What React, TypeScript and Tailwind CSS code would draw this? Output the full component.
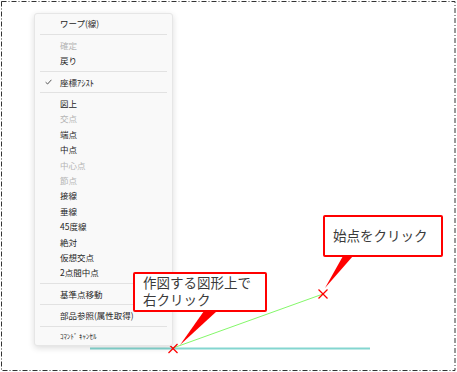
import React from "react"

type Row = { kind: "item"; label: string; disabled?: boolean; checked?: boolean; small?: boolean } | { kind: "sep" }

const rows: Row[] = [
  { kind: "item", label: "ワープ(線)" },
  { kind: "sep" },
  { kind: "item", label: "確定", disabled: true },
  { kind: "item", label: "戻り" },
  { kind: "sep" },
  { kind: "item", label: "座標ｱｼｽﾄ", checked: true },
  { kind: "sep" },
  { kind: "item", label: "図上" },
  { kind: "item", label: "交点", disabled: true },
  { kind: "item", label: "端点" },
  { kind: "item", label: "中点" },
  { kind: "item", label: "中心点", disabled: true },
  { kind: "item", label: "節点", disabled: true },
  { kind: "item", label: "接線" },
  { kind: "item", label: "垂線" },
  { kind: "item", label: "45度線" },
  { kind: "item", label: "絶対" },
  { kind: "item", label: "仮想交点" },
  { kind: "item", label: "2点間中点" },
  { kind: "sep" },
  { kind: "item", label: "基準点移動" },
  { kind: "sep" },
  { kind: "item", label: "部品参照(属性取得)" },
  { kind: "sep" },
  { kind: "item", label: "ｺﾏﾝﾄﾞ ｷｬﾝｾﾙ", small: true },
]

function ContextMenu() {
  return (
    <div className="absolute left-[34px] top-[13px] w-[139px] pt-[2px] pb-[1px] rounded-[3px] border border-[#e6e6e6] bg-[#f9f9f9] shadow-[0_2px_6px_rgba(0,0,0,0.14)]">
      {rows.map((r, i) =>
        r.kind === "sep" ? (
          <div key={i} className="flex h-[6px] items-center px-[5px]">
            <div className="h-px w-full bg-[#e2e2e2]" />
          </div>
        ) : (
          <div key={i} className="flex h-[15.4px] items-center">
            <div className="flex w-[25px] justify-center pl-[2px]">
              {r.checked && (
                <svg width="7" height="6" viewBox="0 0 7 6">
                  <path d="M0.6 3.2 L2.6 5 L6.4 0.8" fill="none" stroke="#444" strokeWidth="0.9" />
                </svg>
              )}
            </div>
            <span
              className={`whitespace-nowrap leading-none ${r.small ? "text-[7px]" : "text-[8.5px]"} ${
                r.disabled ? "text-[#b4b4b4]" : "text-[#262626]"
              }`}
            >
              {r.label}
            </span>
          </div>
        )
      )}
    </div>
  )
}

function Callout({ className, lines }: { className: string; lines: string[] }) {
  return (
    <div className={`absolute flex flex-col rounded-[2px] border-2 border-[#ff0000] bg-white pl-[8px] text-[13.5px] leading-[16.7px] text-[#3a3a3a] ${className}`}>
      {lines.map((l) => (
        <div key={l} className="whitespace-nowrap">
          {l}
        </div>
      ))}
    </div>
  )
}

export default function App() {
  return (
    <div className="relative h-[372px] w-[457px] overflow-hidden bg-white font-['Noto_Sans_CJK_JP','Noto_Sans',sans-serif]">
      <svg className="absolute inset-0" width="457" height="372">
        <rect x="1.5" y="1.5" width="453.5" height="369" fill="none" stroke="#333" strokeWidth="1" strokeDasharray="5 2 1 2" />
        <line x1="90" y1="348.5" x2="370" y2="348.5" stroke="#84d6d0" strokeWidth="2" />
        <line x1="173" y1="348" x2="323" y2="294" stroke="#84f86a" strokeWidth="1" />
        <polygon points="204,311 217,311 180,345" fill="#ff0000" />
        <polygon points="343,256 353,256 325,288" fill="#ff0000" />
        <g stroke="#ff0000" strokeWidth="1.3">
          <line x1="168.5" y1="344" x2="177.5" y2="353" />
          <line x1="177.5" y1="344" x2="168.5" y2="353" />
          <line x1="318.5" y1="289.5" x2="327.5" y2="298.5" />
          <line x1="327.5" y1="289.5" x2="318.5" y2="298.5" />
        </g>
      </svg>
      <ContextMenu />
      <Callout className="left-[133px] top-[272px] h-[40px] w-[134px] justify-start" lines={["作図する図形上で", "右クリック"]} />
      <Callout className="left-[323px] top-[215px] h-[42px] w-[120px] justify-center pb-[2px]" lines={["始点をクリック"]} />
    </div>
  )
}
